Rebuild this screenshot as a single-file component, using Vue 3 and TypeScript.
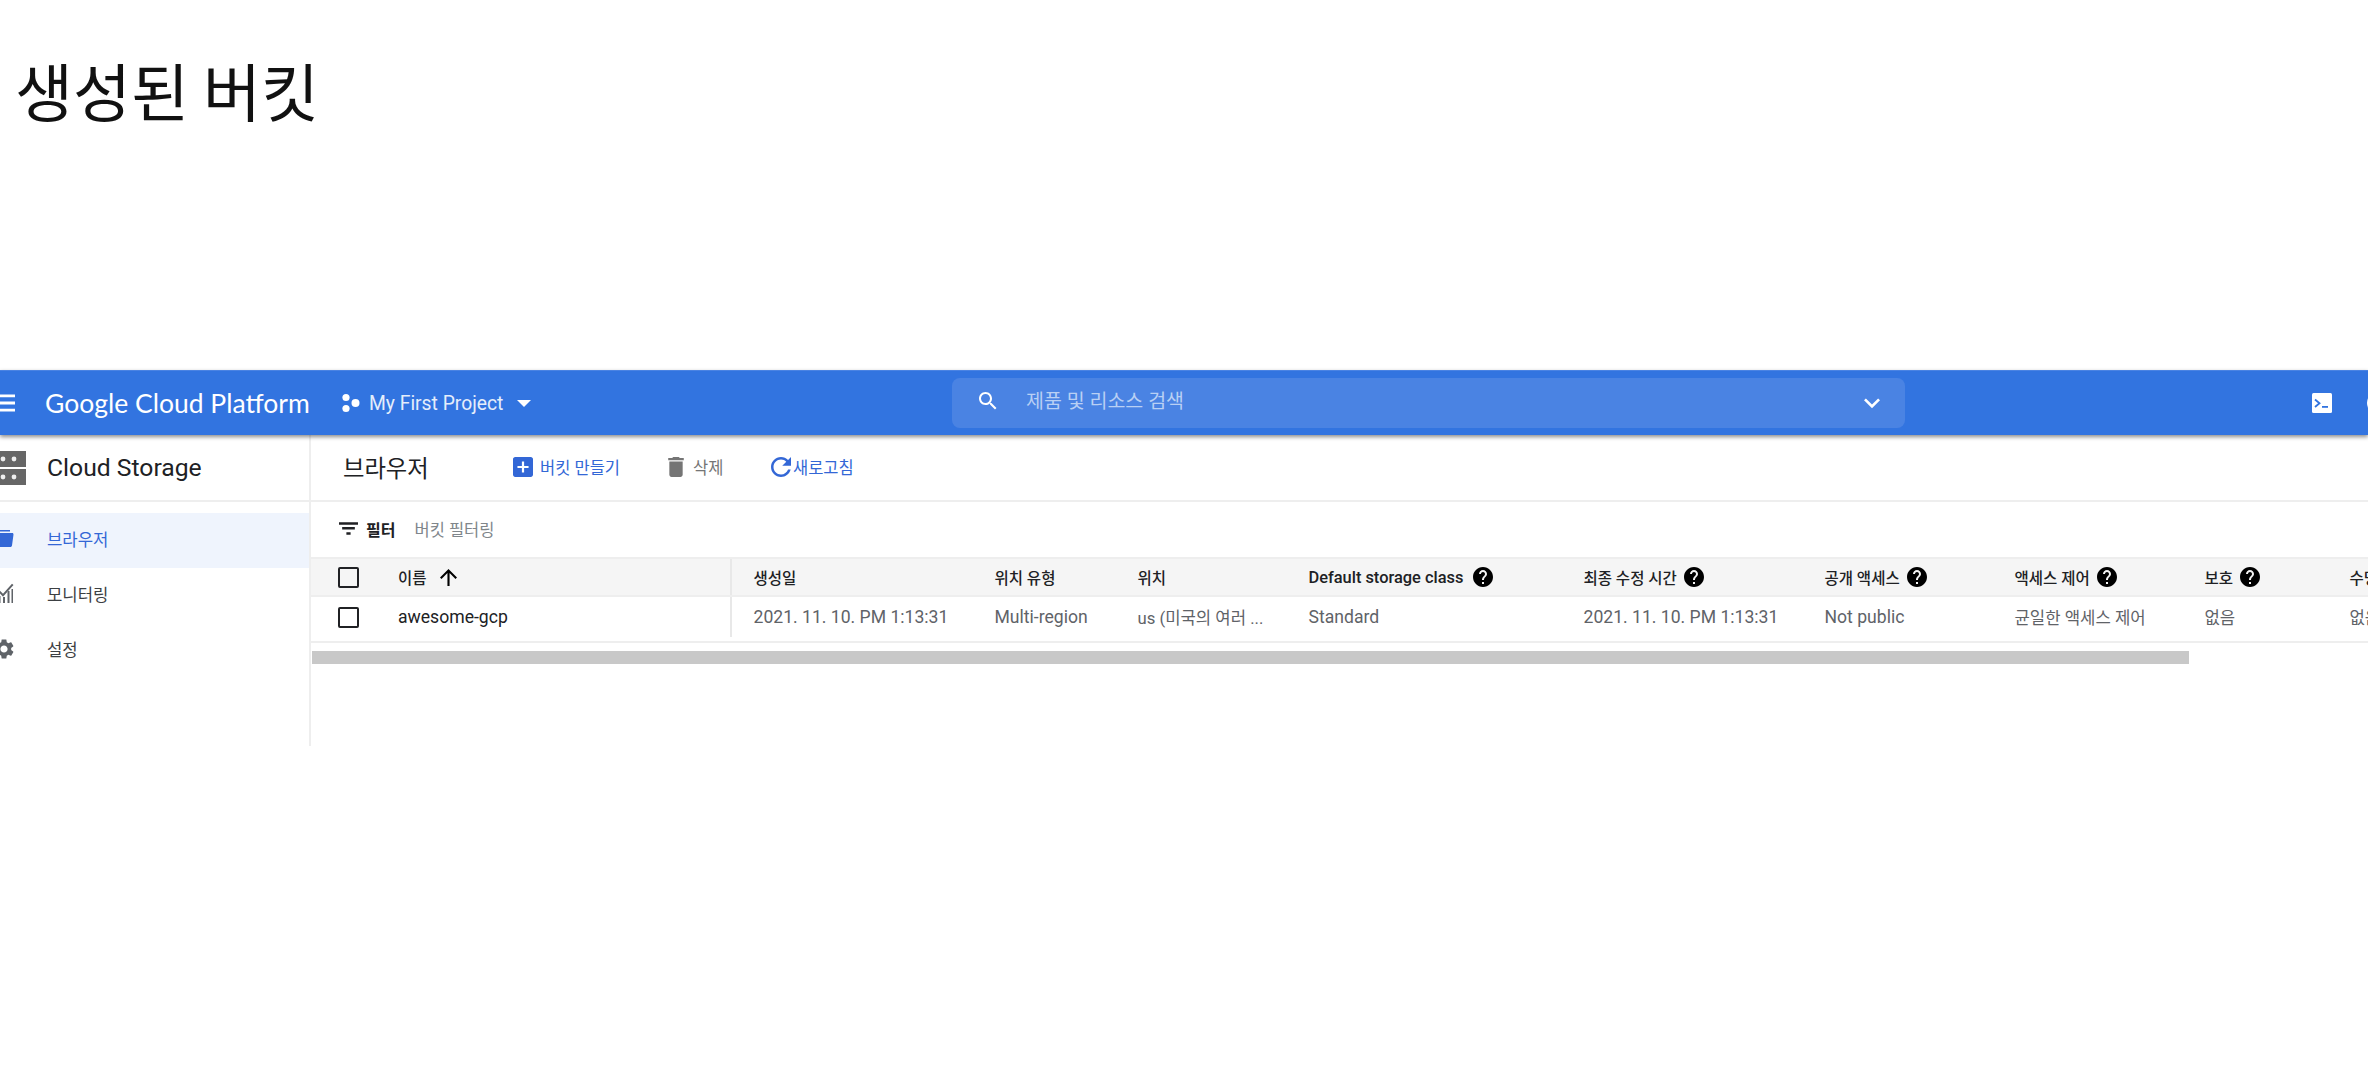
<template>
  <div class="page">
    <h1 class="title">생성된 버킷</h1>

    <div class="console">
      <header class="topbar">
        <svg class="menu-icon" viewBox="0 0 24 24" preserveAspectRatio="none"><path :d="icons.menu" /></svg>
        <span class="brand">Google Cloud Platform</span>
        <svg class="project-icon" viewBox="0 0 20 20">
          <circle cx="5" cy="4.5" r="3.6" />
          <circle cx="5" cy="15.5" r="3.6" />
          <circle cx="14.5" cy="10" r="4" />
        </svg>
        <span class="project">My First Project</span>
        <span class="caret"></span>
        <div class="search">
          <svg class="search-icon" viewBox="0 0 24 24"><path :d="icons.search" /></svg>
          <span class="search-text">제품 및 리소스 검색</span>
          <svg class="chevron" viewBox="0 0 24 24"><path :d="icons.chevron" /></svg>
        </div>
        <svg class="terminal" viewBox="0 0 20 20">
          <rect x="0" y="0" width="20" height="20" rx="1.5" fill="#fff" />
          <path d="M3 6.5l4.5 3.7L3 14" fill="none" stroke="#3274e0" stroke-width="1.8" />
          <rect x="10" y="13" width="6" height="1.8" fill="#3274e0" />
        </svg>
        <span class="top-circle"></span>
      </header>

      <div class="body">
        <aside class="sidebar">
          <div class="side-head">
            <svg class="storage-icon" viewBox="0 0 26 34">
              <rect x="0" y="0" width="26" height="16" fill="#666" />
              <rect x="0" y="18" width="26" height="16" fill="#666" />
              <circle cx="3" cy="8" r="2.4" fill="#eee" />
              <circle cx="14" cy="8" r="2.4" fill="#eee" />
              <circle cx="3" cy="26" r="2.4" fill="#eee" />
              <circle cx="14" cy="26" r="2.4" fill="#eee" />
            </svg>
            <span>Cloud Storage</span>
          </div>
          <nav class="side-nav">
            <a
              v-for="item in navItems"
              :key="item.label"
              class="nav-item"
              :class="{ active: item.active }"
            >
              <svg class="nav-icon" viewBox="0 0 24 24"><path :d="item.icon" /></svg>
              <span>{{ item.label }}</span>
            </a>
          </nav>
        </aside>

        <main class="content">
          <div class="toolbar">
            <span class="toolbar-title">브라우저</span>
            <button class="tool tool-create">
              <svg viewBox="3 3 18 18"><path :d="icons.addBox" /></svg>
              버킷 만들기
            </button>
            <button class="tool tool-delete">
              <svg viewBox="5 3 14 18"><path :d="icons.trash" /></svg>
              삭제
            </button>
            <button class="tool tool-refresh">
              <svg viewBox="4 4 16 16"><path :d="icons.refresh" /></svg>
              새로고침
            </button>
          </div>

          <div class="filter">
            <svg class="filter-icon" viewBox="3 6 18 12"><path d="M10 18h4v-2.500h-4V18zM3 6v2.500h18V6H3zm3 7h12v-2.500H6V13z" /></svg>
            <span class="filter-label">필터</span>
            <span class="filter-hint">버킷 필터링</span>
          </div>

          <div class="table">
            <div class="row head">
              <span class="check"></span>
              <span class="cell name">
                이름
                <svg class="sort" viewBox="4 4 16 16"><path :d="icons.arrowUp" /></svg>
              </span>
              <span v-for="col in columns" :key="col.label" class="cell" :class="{ first: col.first, latin: col.latin }">
                {{ col.label }}
                <svg v-if="col.help" class="help" viewBox="2 2 20 20"><path :d="icons.help" /></svg>
              </span>
            </div>
            <div class="row data">
              <span class="check"></span>
              <span class="cell name">awesome-gcp</span>
              <span v-for="(val, i) in rowValues" :key="i" class="cell" :class="{ first: i === 0, ko: val.ko }">{{ val.text }}</span>
            </div>
          </div>

          <div class="scroll-track"><div class="scroll-thumb"></div></div>
        </main>
      </div>
    </div>
  </div>
</template>

<script setup lang="ts">
const icons = {
  menu: "M3 18h18v-2H3v2zm0-5h18v-2H3v2zm0-7v2h18V6H3z",
  search:
    "M15.5 14h-.79l-.28-.27C15.41 12.59 16 11.11 16 9.5 16 5.91 13.09 3 9.5 3S3 5.91 3 9.5 5.91 16 9.5 16c1.61 0 3.09-.59 4.23-1.57l.27.28v.79l5 4.99L20.49 19l-4.99-5zm-6 0C7.01 14 5 11.99 5 9.5S7.01 5 9.5 5 14 7.01 14 9.5 11.99 14 9.5 14z",
  chevron: "M7.41 8.59L12 13.17l4.59-4.58L18 10l-6 6-6-6z",
  addBox:
    "M19 3H5c-1.11 0-2 .9-2 2v14c0 1.1.89 2 2 2h14c1.1 0 2-.9 2-2V5c0-1.1-.9-2-2-2zm-2 10h-4v4h-2v-4H7v-2h4V7h2v4h4v2z",
  trash: "M6 19c0 1.1.9 2 2 2h8c1.1 0 2-.9 2-2V7H6v12zM19 4h-3.5l-1-1h-5l-1 1H5v2h14V4z",
  refresh:
    "M17.65 6.35C16.2 4.9 14.21 4 12 4c-4.42 0-7.99 3.58-7.99 8s3.57 8 7.99 8c3.73 0 6.84-2.55 7.73-6h-2.08c-.82 2.33-3.04 4-5.65 4-3.31 0-6-2.69-6-6s2.69-6 6-6c1.66 0 3.14.69 4.22 1.78L13 11h7V4l-2.35 2.35z",
  arrowUp: "M4 12l1.41 1.41L11 7.83V20h2V7.83l5.58 5.59L20 12l-8-8-8 8z",
  help:
    "M12 2C6.48 2 2 6.48 2 12s4.48 10 10 10 10-4.48 10-10S17.52 2 12 2zm1 17h-2v-2h2v2zm2.07-7.75l-.9.92C13.45 12.9 13 13.5 13 15h-2v-.5c0-1.1.45-2.1 1.17-2.83l1.24-1.26c.37-.36.59-.86.59-1.41 0-1.1-.9-2-2-2s-2 .9-2 2H8c0-2.21 1.79-4 4-4s4 1.79 4 4c0 .88-.36 1.68-.93 2.25z",
  folder: "M2 3h16v1.500H2V3zM2 6h19l.5 1.500-1.500 11c-.1.8-.8 1.500-1.600 1.500H2V6z",
  chart: "M2 21h2v-6H2v6zm4.500 0h2v-7h-2v7zm4.500 0h2v-6h-2v6zm4.500 0h2V9h-2v12zm4 0h1.500V7H19.500v14zM2 5l1.300-1.200 7.700 8 9-10 1.500 1.300-10.500 11.700L2 5z",
  gear:
    "M19.14 12.94c.04-.3.06-.61.06-.94 0-.32-.02-.64-.07-.94l2.03-1.58c.18-.14.23-.41.12-.61l-1.92-3.32c-.12-.22-.37-.29-.59-.22l-2.39.96c-.5-.38-1.03-.7-1.62-.94l-.36-2.54c-.04-.24-.24-.41-.48-.41h-3.84c-.24 0-.43.17-.47.41l-.36 2.54c-.59.24-1.13.57-1.62.94l-2.39-.96c-.22-.08-.47 0-.59.22L2.74 8.87c-.12.21-.08.47.12.61l2.03 1.58c-.05.3-.09.63-.09.94s.02.64.07.94l-2.03 1.58c-.18.14-.23.41-.12.61l1.92 3.32c.12.22.37.29.59.22l2.39-.96c.5.38 1.03.7 1.62.94l.36 2.54c.05.24.24.41.48.41h3.84c.24 0 .44-.17.47-.41l.36-2.54c.59-.24 1.13-.56 1.62-.94l2.39.96c.22.08.47 0 .59-.22l1.92-3.32c.12-.22.07-.47-.12-.61l-2.01-1.58zM12 15.6c-1.98 0-3.6-1.62-3.6-3.6s1.62-3.6 3.6-3.6 3.6 1.62 3.6 3.6-1.62 3.6-3.6 3.6z",
}

const navItems = [
  { label: "브라우저", icon: icons.folder, active: true },
  { label: "모니터링", icon: icons.chart, active: false },
  { label: "설정", icon: icons.gear, active: false },
]

const columns = [
  { label: "생성일", first: true },
  { label: "위치 유형" },
  { label: "위치" },
  { label: "Default storage class", help: true, latin: true },
  { label: "최종 수정 시간", help: true },
  { label: "공개 액세스", help: true },
  { label: "액세스 제어", help: true },
  { label: "보호", help: true },
  { label: "수명 주기" },
]

const rowValues = [
  { text: "2021. 11. 10. PM 1:13:31" },
  { text: "Multi-region" },
  { text: "us (미국의 여러 ...", ko: true },
  { text: "Standard" },
  { text: "2021. 11. 10. PM 1:13:31" },
  { text: "Not public" },
  { text: "균일한 액세스 제어", ko: true },
  { text: "없음", ko: true },
  { text: "없음", ko: true },
]
</script>

<style>
html,
body {
  background: #fff;
  overflow: hidden;
}
</style>

<style scoped>
.page {
  width: 2368px;
  height: 1080px;
  overflow: hidden;
  background: #fff;
  font-family: Roboto, "Noto Sans CJK KR", sans-serif;
  color: #202124;
}

.title {
  margin: 0;
  padding: 46px 0 0 15px;
  height: 370px;
  box-sizing: border-box;
  font-family: "Noto Sans CJK KR", sans-serif;
  font-size: 63px;
  font-weight: 400;
  line-height: 86px;
  color: #111;
}

.console {
  width: 2368px;
}

.topbar {
  height: 65px;
  background: #3274e0;
  border-top: 1px solid #4a83e3;
  box-sizing: border-box;
  box-shadow: 0 2px 4px rgba(0, 0, 0, 0.45);
  position: relative;
  display: flex;
  align-items: center;
  color: #fff;
}

.topbar > * {
  flex: none;
}

.menu-icon {
  width: 24px;
  height: 34px;
  margin-left: -6px;
  fill: #fff;
}

.brand {
  margin-left: 27px;
  font-family: Lato, Roboto, sans-serif;
  font-size: 26.5px;
  width: 265px;
  white-space: nowrap;
}

.project-icon {
  width: 20px;
  height: 20px;
  margin-left: 31px;
  fill: #fff;
}

.project {
  margin-left: 8px;
  font-size: 19.3px;
  width: 140px;
  color: #e4edfb;
  white-space: nowrap;
}

.caret {
  margin-left: 8px;
  margin-right: 2px;
  border-left: 7px solid transparent;
  border-right: 7px solid transparent;
  border-top: 7px solid #fff;
}

.search {
  margin-left: 419px;
  width: 953px;
  height: 50px;
  border-radius: 8px;
  background: #4a83e3;
  display: flex;
  align-items: center;
}

.search-icon {
  width: 24px;
  height: 24px;
  margin-left: 24px;
  margin-bottom: 4px;
  fill: #fff;
}

.search-text {
  margin-left: 26px;
  margin-bottom: 8px;
  font-size: 19.5px;
  color: #b9d0f4;
  flex: 1;
}

.chevron {
  width: 32px;
  height: 32px;
  fill: #fff;
  margin-right: 17px;
}

.terminal {
  width: 20px;
  height: 20px;
  margin-left: 407px;
}

.top-circle {
  width: 22px;
  height: 22px;
  border-radius: 50%;
  background: #fff;
  margin-left: 35px;
}

.body {
  display: flex;
  height: 311px;
}

.sidebar {
  width: 309px;
  flex: none;
  border-right: 2px solid #eee;
}

.side-head {
  height: 65px;
  border-bottom: 2px solid #eee;
  display: flex;
  align-items: center;
  font-size: 24.7px;
  color: #202124;
}

.storage-icon {
  width: 26px;
  height: 34px;
  margin-right: 21px;
}

.side-nav {
  padding-top: 11px;
  display: flex;
  flex-direction: column;
}

.nav-item {
  height: 55px;
  padding-bottom: 3px;
  box-sizing: border-box;
  display: flex;
  align-items: center;
  font-size: 16.7px;
  color: #3c4043;
}

.nav-item.active {
  background: #eff4fd;
  color: #3367d6;
}

.nav-icon {
  width: 24px;
  height: 24px;
  margin-left: -8px;
  margin-right: 31px;
  fill: #5f6368;
}

.nav-item.active .nav-icon {
  fill: #3367d6;
}

.content {
  flex: 1;
  min-width: 0;
}

.toolbar {
  height: 63px;
  padding-bottom: 2px;
  border-bottom: 2px solid #eee;
  display: flex;
  align-items: center;
}

.toolbar-title {
  margin-left: 32px;
  font-size: 23.3px;
  width: 170px;
  color: #202124;
}

.tool {
  display: flex;
  align-items: center;
  border: 0;
  padding: 0;
  background: none;
  font: inherit;
  font-size: 16.5px;
}

.tool svg {
  height: 20px;
  fill: currentColor;
}

.tool-create {
  color: #3367d6;
  gap: 7px;
  width: 155px;
}

.tool-create svg {
  width: 20px;
}

.tool-delete {
  color: #757575;
  gap: 9px;
  width: 103px;
}

.tool-delete svg {
  width: 16px;
}

.tool-refresh {
  color: #3367d6;
  gap: 2px;
}

.tool-refresh svg {
  width: 20px;
}

.filter {
  height: 55px;
  padding-bottom: 2px;
  box-sizing: border-box;
  display: flex;
  align-items: center;
  font-size: 16.5px;
}

.filter-icon {
  width: 19px;
  height: 13px;
  margin-left: 28px;
  fill: #202124;
}

.filter-label {
  margin-left: 8px;
  font-weight: 700;
  font-size: 16px;
}

.filter-hint {
  margin-left: 19px;
  color: #80868b;
}

.table {
  border-bottom: 2px solid #eee;
}

.row {
  display: grid;
  grid-template-columns: 60px 332px 241px 143px 171px 275px 241px 190px 190px 145px 120px;
  padding-left: 27px;
  align-items: stretch;
  white-space: nowrap;
}

.row.head {
  height: 40px;
  background: #f5f5f5;
  border-top: 2px solid #eee;
  border-bottom: 2px solid #eee;
  box-sizing: border-box;
  font-size: 15.5px;
  font-weight: 500;
  color: #202124;
}

.head .cell.latin {
  font-size: 16.4px;
  gap: 10px;
}

.row.data {
  height: 44px;
  padding-bottom: 4px;
  box-sizing: border-box;
  font-size: 17.6px;
  color: #5f6368;
}

.data .ko {
  font-size: 16.7px;
}

.check {
  width: 21px;
  height: 21px;
  border: 2.5px solid #202124;
  box-sizing: border-box;
  align-self: center;
  border-radius: 2px;
}

.cell {
  display: flex;
  align-items: center;
  padding-left: 23.5px;
  gap: 7px;
}

.cell.name {
  padding-left: 0;
}

.data .cell.name {
  color: #202124;
}

.cell.first {
  border-left: 2px solid #e8e8e8;
  padding-left: 21.5px;
}

.sort {
  width: 17px;
  height: 17px;
  margin-left: 6px;
  fill: #000;
}

.help {
  width: 20px;
  height: 20px;
  fill: #000;
  flex: none;
}

.scroll-track {
  padding: 8px 0 0 1px;
}

.scroll-thumb {
  width: 1877px;
  height: 13px;
  background: #c8c8c8;
}
</style>
